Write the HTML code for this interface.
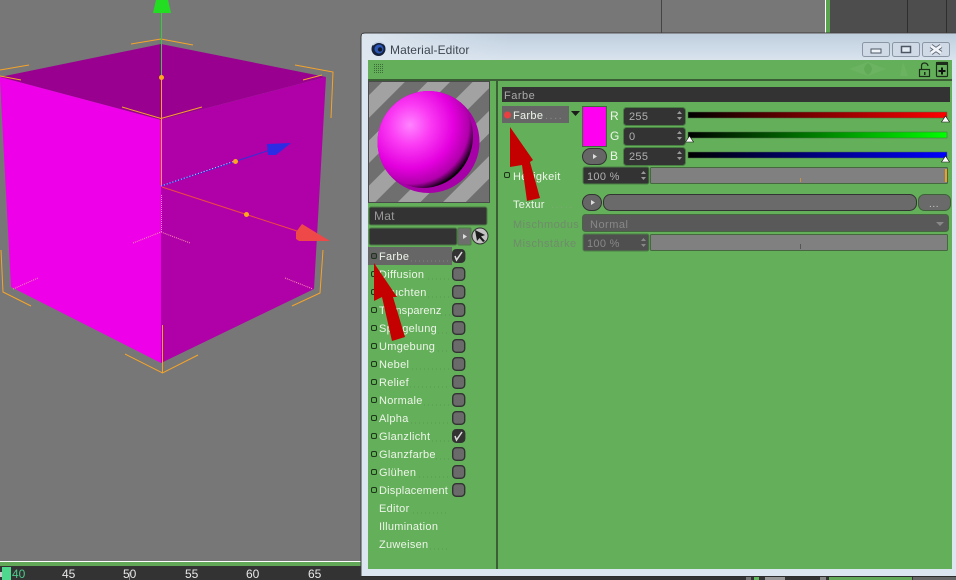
<!DOCTYPE html>
<html><head><meta charset="utf-8"><title>Material-Editor</title>
<style>
html,body{margin:0;padding:0;width:956px;height:580px;overflow:hidden;background:#777}
svg{display:block}
text{font-family:"Liberation Sans",sans-serif;font-size:11px}
.l{fill:#eef5ea;letter-spacing:.3px}
.v{fill:#b0b0b0;letter-spacing:.3px}
.d{fill:#6f8c6b;letter-spacing:.45px}
.t{fill:#e8e8e8;font-size:12px}
</style></head><body>
<svg width="956" height="580" viewBox="0 0 956 580" xmlns="http://www.w3.org/2000/svg">
<defs>
<linearGradient id="tb" x1="0" y1="0" x2="0" y2="1"><stop offset="0" stop-color="#c0cfde"/><stop offset="1" stop-color="#d8e3ee"/></linearGradient>
<linearGradient id="tb2" x1="0" y1="0" x2="1" y2="0"><stop offset="0" stop-color="#dfe8f1" stop-opacity=".9"/><stop offset=".5" stop-color="#dfe8f1" stop-opacity="0"/></linearGradient>
<linearGradient id="rg"><stop offset="0" stop-color="#000"/><stop offset="1" stop-color="#f00"/></linearGradient>
<linearGradient id="gg"><stop offset="0" stop-color="#000"/><stop offset="1" stop-color="#0f0"/></linearGradient>
<linearGradient id="bg"><stop offset="0" stop-color="#000"/><stop offset="1" stop-color="#00f"/></linearGradient>
<radialGradient id="sph" gradientUnits="userSpaceOnUse" cx="410" cy="125" r="67"><stop offset="0" stop-color="#ff84ff"/><stop offset=".3" stop-color="#fb3cf4"/><stop offset=".65" stop-color="#e400de"/><stop offset=".88" stop-color="#b000aa"/><stop offset=".96" stop-color="#400040"/><stop offset="1" stop-color="#000"/></radialGradient>
<pattern id="st" width="32" height="32" patternUnits="userSpaceOnUse" patternTransform="translate(369 81) rotate(45)"><rect width="32" height="32" fill="#6f6f6f"/><rect x="10" width="16" height="32" fill="#a2a2a2"/></pattern>
<pattern id="dt" width="2" height="2" patternUnits="userSpaceOnUse"><rect width="1" height="1" fill="#3c6a38"/></pattern>
<clipPath id="sc"><circle cx="428.500" cy="142" r="51"/></clipPath>
</defs>

<!-- viewport -->
<rect width="956" height="580" fill="#777"/>
<rect x="661" y="0" width="1" height="33" fill="#444"/>
<rect x="825" y="0" width="1" height="33" fill="#fff"/>
<rect x="826" y="0" width="4" height="33" fill="#5aa34f"/>
<rect x="830" y="0" width="126" height="33" fill="#4d4d4d"/>
<rect x="907" y="0" width="1" height="33" fill="#2e2e2e"/>
<rect x="946" y="0" width="1" height="33" fill="#2e2e2e"/>

<!-- cube -->
<polygon points="0,77 161,44 326,77 161,120" fill="#990090"/>
<polygon points="0,77 161,120 161,363 11,287 0,80" fill="#ee00e8"/>
<polygon points="161,120 326,77 314,289 161,363" fill="#b000a8"/>

<!-- bounding guides -->
<g fill="none" stroke="#f5a42a" stroke-width="1">
<polyline points="131,44 161,39 193,45"/>
<polyline points="295,65 333,72 331,118"/>
<polyline points="303,80 322,75"/>
<polyline points="0,70 29,65"/>
<polyline points="0,76 21,80"/>
<polyline points="122,107 161,118.500 202,107"/>
<line x1="161.500" y1="77" x2="161.500" y2="185"/>
<polyline points="323,250 320,293 292,306"/>
<polyline points="1,250 3,292 31,306"/>
<polyline points="125,354 162.500,373 198,355"/>
<line x1="162.500" y1="325" x2="162.500" y2="373"/>
</g>
<g fill="none" stroke="#ff8fb0" stroke-width="1" stroke-dasharray="1 1">
<line x1="161.500" y1="195" x2="161.500" y2="232"/>
<polyline points="133,243 161,232 190,243"/>
<line x1="13" y1="289" x2="38" y2="278"/>
<line x1="285" y1="278" x2="313" y2="289"/>
</g>
<!-- axes -->
<line x1="161.500" y1="13" x2="161.500" y2="77" stroke="#36cc3a"/>
<polygon points="153,13 171,13 168,0 156,0" fill="#22dd22"/>
<line x1="161" y1="186" x2="270" y2="150" stroke="#3030d8"/>
<line x1="161" y1="186" x2="235" y2="161" stroke="#fff" stroke-dasharray="1 2" opacity=".8"/>
<polygon points="267,144 291,143 276,155 268,155" fill="#2c2ce4"/>
<line x1="162" y1="187" x2="297" y2="231" stroke="#ee4a40"/>
<polygon points="296,232 302,224 330,241 299,241 296,239" fill="#ee4848"/>
<circle cx="161.500" cy="77.500" r="2.500" fill="#fca81c"/>
<circle cx="235.500" cy="161.500" r="2.500" fill="#fca81c"/>
<circle cx="246.500" cy="214.500" r="2.500" fill="#fca81c"/>

<!-- timeline -->
<rect x="0" y="561" width="956" height="1" fill="#fff"/>
<rect x="0" y="562" width="956" height="4" fill="#63a858"/>
<rect x="0" y="566" width="956" height="14" fill="#333"/>
<rect x="0" y="572" width="2" height="5" fill="#ccc"/>
<rect x="2" y="567" width="9" height="13" fill="#4fd98f"/>
<text class="t" x="12" y="578" style="fill:#4fc98a">40</text>
<text class="t" x="62" y="578">45</text>
<text class="t" x="123" y="578">50</text>
<rect x="129" y="572" width="1" height="8" fill="#888"/>
<text class="t" x="185" y="578">55</text>
<text class="t" x="246" y="578">60</text>
<text class="t" x="308" y="578">65</text>
<rect x="746" y="577" width="5" height="3" fill="#777"/>
<rect x="754" y="577" width="5" height="3" fill="#5fb85a"/>
<rect x="765" y="577" width="20" height="3" fill="#999"/>
<rect x="820" y="577" width="6" height="3" fill="#888"/>
<rect x="829" y="577" width="83" height="3" fill="#62aa58"/>
<rect x="913" y="577" width="43" height="3" fill="#666"/>

<!-- window -->
<path d="M361,576 V37 Q361,33 365,33 H956 V576 Z" fill="#dce6f1"/>
<path d="M361,576 V37 Q361,33 365,33 H956" fill="none" stroke="#3e3e3e" stroke-width="1"/>
<rect x="362" y="34" width="594" height="26" fill="url(#tb)"/>
<rect x="362" y="34" width="300" height="26" fill="url(#tb2)"/>
<rect x="361" y="576" width="595" height="1" fill="#2c2c2c"/>
<circle cx="378.500" cy="49" r="7" fill="#16223c"/>
<circle cx="379" cy="49" r="4.500" fill="#2c58b8"/>
<circle cx="380" cy="49.500" r="2.200" fill="#10182c"/>
<path d="M373,45 Q378,40 384,44" stroke="#c8d4e8" stroke-width="1.500" fill="none"/>
<text x="390" y="54" style="font-size:12px;fill:#3e4650;letter-spacing:.1px">Material-Editor</text>

<!-- window buttons -->
<g stroke="#8a96a4" fill="#cfdae6">
<rect x="862.500" y="42.500" width="27" height="14" rx="2"/>
<rect x="892.500" y="42.500" width="27" height="14" rx="2"/>
<rect x="922.500" y="42.500" width="27" height="14" rx="2"/>
</g>
<rect x="871" y="49" width="10" height="4" fill="#eef3f8" stroke="#4c5563"/>
<rect x="901.500" y="46.500" width="9" height="6" fill="#e4ebf2" stroke="#4c5563" stroke-width="1.500"/>
<path d="M931,46 L941,53 M941,46 L931,53" stroke="#5c6672" stroke-width="4.500" fill="none"/>
<path d="M931,46 L941,53 M941,46 L931,53" stroke="#f2f6fa" stroke-width="2.800" fill="none"/>

<!-- client -->
<rect x="368" y="60" width="584" height="509" fill="#64af5a"/>
<rect x="373" y="63" width="11" height="11" fill="url(#dt)"/>
<path d="M849,69 L868,62 L886,69 L868,76Z M900,76 L903,62 L908,76Z" fill="#6bb361"/>
<path d="M868,63 Q876,69 868,75 Q860,69 868,63Z" fill="#60aa56"/>
<rect x="919.500" y="69.500" width="10" height="7" fill="none" stroke="#1c2e1a" stroke-width="1.200"/>
<path d="M921.500,69 V66 Q921.500,63 924.500,63 Q927.500,63 928,66" fill="none" stroke="#1c2e1a" stroke-width="1.200"/>
<rect x="924" y="72" width="1.500" height="3" fill="#1c2e1a"/>
<rect x="936.500" y="62.500" width="11" height="14" rx="1" fill="none" stroke="#1c2e1a" stroke-width="1.200"/>
<rect x="936" y="62" width="12" height="3" fill="#1c2e1a"/>
<path d="M942,67.500 V74.500 M938.500,71 H945.500" stroke="#111" stroke-width="2"/>
<rect x="368" y="79" width="584" height="2" fill="#3b5e37"/>
<rect x="496" y="81" width="2" height="488" fill="#3b5e37"/>

<!-- preview -->
<rect x="368.500" y="81.500" width="121" height="121" fill="url(#st)" stroke="#4a4a4a"/>
<circle cx="428.500" cy="142" r="51" fill="#a800a8"/>
<g clip-path="url(#sc)"><ellipse cx="423" cy="136" rx="50" ry="52" fill="url(#sph)"/></g>

<!-- name fields -->
<rect x="369" y="207" width="118" height="18" rx="2" fill="#333" stroke="#4d7d47"/>
<text x="374" y="220" style="fill:#999;font-size:12px;letter-spacing:.2px">Mat</text>
<rect x="369" y="228" width="88" height="17" rx="2" fill="#333" stroke="#4d7d47"/>
<rect x="458" y="228" width="13" height="17" rx="1" fill="#6e6e6e" stroke="#4d7d47"/>
<polygon points="463,234 467,236.500 463,239" fill="#ddd"/>
<circle cx="480" cy="236" r="8" fill="#c4c4c4" stroke="#333"/>
<path d="M475,230 L485,235 L481,236.500 L485,241 L483,242 L479.500,238 L477,241Z" fill="#1c1c1c"/>

<!-- channel list -->
<rect x="368" y="247" width="84" height="18" fill="#666"/>
<g fill="none" stroke="#1e351b" stroke-width="1">
<rect x="371.500" y="253.500" width="5" height="5" rx="1.500" fill="#555"/>
<rect x="371.500" y="271.500" width="5" height="5" rx="1.500"/>
<rect x="371.500" y="289.500" width="5" height="5" rx="1.500"/>
<rect x="371.500" y="307.500" width="5" height="5" rx="1.500"/>
<rect x="371.500" y="325.500" width="5" height="5" rx="1.500"/>
<rect x="371.500" y="343.500" width="5" height="5" rx="1.500"/>
<rect x="371.500" y="361.500" width="5" height="5" rx="1.500"/>
<rect x="371.500" y="379.500" width="5" height="5" rx="1.500"/>
<rect x="371.500" y="397.500" width="5" height="5" rx="1.500"/>
<rect x="371.500" y="415.500" width="5" height="5" rx="1.500"/>
<rect x="371.500" y="433.500" width="5" height="5" rx="1.500"/>
<rect x="371.500" y="451.500" width="5" height="5" rx="1.500"/>
<rect x="371.500" y="469.500" width="5" height="5" rx="1.500"/>
<rect x="371.500" y="487.500" width="5" height="5" rx="1.500"/>
</g>
<g stroke="#3d6f38" stroke-dasharray="1 3" opacity=".35">
<line x1="411" y1="261" x2="450" y2="261" stroke="#bbb"/>
<line x1="428" y1="279" x2="450" y2="279"/>
<line x1="428" y1="297" x2="450" y2="297"/>
<line x1="441" y1="315" x2="450" y2="315"/>
<line x1="438" y1="333" x2="450" y2="333"/>
<line x1="438" y1="351" x2="450" y2="351"/>
<line x1="412" y1="369" x2="450" y2="369"/>
<line x1="410" y1="387" x2="450" y2="387"/>
<line x1="424" y1="405" x2="450" y2="405"/>
<line x1="411" y1="423" x2="450" y2="423"/>
<line x1="432" y1="441" x2="450" y2="441"/>
<line x1="436" y1="459" x2="450" y2="459"/>
<line x1="419" y1="477" x2="450" y2="477"/>
<line x1="413" y1="513" x2="448" y2="513"/>
<line x1="430" y1="549" x2="448" y2="549"/>
</g>
<g>
<text class="l" x="379" y="260">Farbe</text>
<text class="l" x="379" y="278">Diffusion</text>
<text class="l" x="379" y="296">Leuchten</text>
<text class="l" x="379" y="314" style="letter-spacing:.1px">Transparenz</text>
<text class="l" x="379" y="332">Spiegelung</text>
<text class="l" x="379" y="350">Umgebung</text>
<text class="l" x="379" y="368">Nebel</text>
<text class="l" x="379" y="386">Relief</text>
<text class="l" x="379" y="404">Normale</text>
<text class="l" x="379" y="422">Alpha</text>
<text class="l" x="379" y="440">Glanzlicht</text>
<text class="l" x="379" y="458">Glanzfarbe</text>
<text class="l" x="379" y="476">Glühen</text>
<text class="l" x="379" y="494" style="letter-spacing:.2px">Displacement</text>
<text class="l" x="379" y="512">Editor</text>
<text class="l" x="379" y="530">Illumination</text>
<text class="l" x="379" y="548">Zuweisen</text>
</g>
<!-- checkboxes -->
<g fill="#6a6a6a" stroke="#333" stroke-width="1.400">
<rect x="452.700" y="249.700" width="12" height="12.600" rx="3.500" fill="#333"/>
<rect x="452.700" y="267.700" width="12" height="12.600" rx="3.500"/>
<rect x="452.700" y="285.700" width="12" height="12.600" rx="3.500"/>
<rect x="452.700" y="303.700" width="12" height="12.600" rx="3.500"/>
<rect x="452.700" y="321.700" width="12" height="12.600" rx="3.500"/>
<rect x="452.700" y="339.700" width="12" height="12.600" rx="3.500"/>
<rect x="452.700" y="357.700" width="12" height="12.600" rx="3.500"/>
<rect x="452.700" y="375.700" width="12" height="12.600" rx="3.500"/>
<rect x="452.700" y="393.700" width="12" height="12.600" rx="3.500"/>
<rect x="452.700" y="411.700" width="12" height="12.600" rx="3.500"/>
<rect x="452.700" y="429.700" width="12" height="12.600" rx="3.500" fill="#333"/>
<rect x="452.700" y="447.700" width="12" height="12.600" rx="3.500"/>
<rect x="452.700" y="465.700" width="12" height="12.600" rx="3.500"/>
<rect x="452.700" y="483.700" width="12" height="12.600" rx="3.500"/>
</g>
<path d="M455,256 L456.500,260 L462,252 M455,436 L456.500,440 L462,432" fill="none" stroke="#ddd" stroke-width="1.500"/>

<!-- right panel -->
<rect x="502" y="87" width="448" height="15" fill="#333"/>
<text x="504" y="99" style="fill:#aaa;font-size:11px;letter-spacing:.5px">Farbe</text>
<rect x="502" y="106" width="67" height="17" fill="#666"/>
<circle cx="507.500" cy="115" r="3.500" fill="#e84040"/>
<text class="l" x="513" y="119">Farbe</text>
<text x="545" y="119" style="fill:#888;letter-spacing:1.500px">....</text>
<polygon points="571,111 580,111 575.500,116" fill="#1c1c1c"/>
<rect x="582.500" y="106.500" width="24" height="40" fill="#ff00f0" stroke="#3f6a3a"/>
<text class="l" x="610" y="120" style="font-size:12px">R</text>
<text class="l" x="610" y="140" style="font-size:12px">G</text>
<text class="l" x="610" y="160" style="font-size:12px">B</text>
<g fill="#333" stroke="#4a7f44">
<rect x="623.500" y="107.500" width="62" height="18" rx="3"/>
<rect x="623.500" y="127.500" width="62" height="18" rx="3"/>
<rect x="623.500" y="147.500" width="62" height="18" rx="3"/>
</g>
<text class="v" x="629" y="120">255</text>
<text class="v" x="629" y="140">0</text>
<text class="v" x="629" y="160">255</text>
<g fill="#999">
<path d="M677,114 L679.500,111 L682,114Z M677,117 L679.500,120 L682,117Z"/>
<path d="M677,134 L679.500,131 L682,134Z M677,137 L679.500,140 L682,137Z"/>
<path d="M677,154 L679.500,151 L682,154Z M677,157 L679.500,160 L682,157Z"/>
</g>
<rect x="688" y="112" width="259" height="6" fill="url(#rg)" stroke="#4a6f44" stroke-width=".5"/>
<rect x="688" y="132" width="259" height="6" fill="url(#gg)" stroke="#4a6f44" stroke-width=".5"/>
<rect x="688" y="152" width="259" height="6" fill="url(#bg)" stroke="#4a6f44" stroke-width=".5"/>
<g fill="#fff" stroke="#111" stroke-width=".6">
<polygon points="945.500,116 949.500,122 941.500,122"/>
<polygon points="689.500,136 693.500,142 685.500,142"/>
<polygon points="945.500,156 949.500,162 941.500,162"/>
</g>
<rect x="582.500" y="148.500" width="24" height="16" rx="8" fill="#666" stroke="#333"/>
<polygon points="593,154 597,156.500 593,159" fill="#ddd"/>

<!-- Helligkeit -->
<rect x="504.500" y="172.500" width="5" height="5" rx="1.500" fill="none" stroke="#1e351b"/>
<text class="l" x="513" y="180">Helligkeit</text>
<rect x="583" y="167" width="66" height="17" rx="2" fill="#333" stroke="#4a7f44"/>
<text class="v" x="587" y="180">100 %</text>
<path d="M641,174 L643.500,171 L646,174Z M641,177 L643.500,180 L646,177Z" fill="#999"/>
<rect x="650.500" y="167.500" width="297" height="16" rx="1" fill="#808080" stroke="#45683f"/>
<rect x="945" y="169" width="2" height="13" fill="#f0a020"/>
<rect x="800" y="178" width="1" height="4" fill="#c89048"/>

<!-- Textur -->
<text class="l" x="513" y="208">Textur</text>
<text x="551" y="208" style="fill:#7da877;letter-spacing:1.500px">.....</text>
<rect x="582.500" y="194.500" width="19" height="16" rx="8" fill="#666" stroke="#333"/>
<polygon points="591,200 595,202.500 591,205" fill="#ddd"/>
<rect x="603.500" y="194.500" width="313" height="16" rx="7" fill="#6a6a6a" stroke="#333"/>
<rect x="918.500" y="194.500" width="32" height="16" rx="6" fill="#6a6a6a" stroke="#3f5f3a"/>
<text x="929" y="207" style="fill:#ccc;font-size:10px;letter-spacing:.6px">...</text>

<!-- Mischmodus -->
<text class="d" x="513" y="228">Mischmodus</text>
<rect x="582.500" y="214.500" width="366" height="17" rx="3" fill="#595959" stroke="#45683f"/>
<text x="590" y="228" style="fill:#888;font-size:11px;letter-spacing:.5px">Normal</text>
<polygon points="936,222 944,222 940,226" fill="#888"/>

<!-- Mischstaerke -->
<text class="d" x="513" y="247">Mischstärke</text>
<rect x="583" y="234" width="66" height="17" rx="2" fill="#4f4f4f" stroke="#4a7f44"/>
<text x="587" y="247" style="fill:#888;letter-spacing:.3px">100 %</text>
<path d="M641,241 L643.500,238 L646,241Z M641,244 L643.500,247 L646,244Z" fill="#888"/>
<rect x="650.500" y="234.500" width="297" height="16" rx="1" fill="#808080" stroke="#45683f"/>
<rect x="800" y="244" width="1" height="5" fill="#555"/>

<!-- red arrows -->
<polygon points="374,263 397,297 393,297 405,337 392,341 382,297 374,301" fill="#c40000"/>
<polygon points="510,127 533,160 530,162 540,198 527,201 522,165 510,167" fill="#c40000"/>
</svg>
</body></html>
